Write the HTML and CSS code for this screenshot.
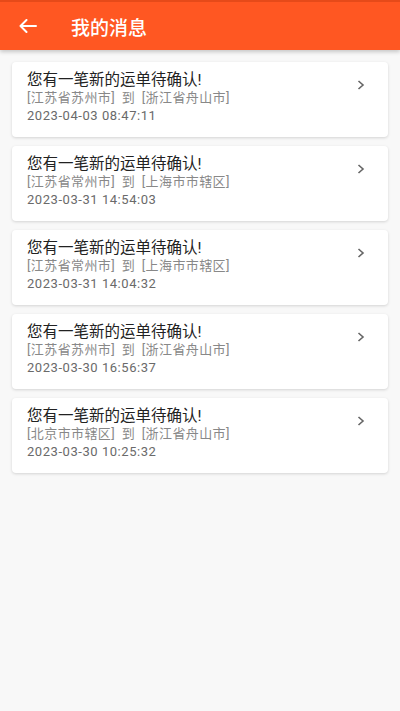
FILE: index.html
```html
<!DOCTYPE html>
<html lang="zh">
<head>
<meta charset="utf-8">
<link rel="stylesheet" href="styles.css">
</head>
<body>
<header class="topbar">
  <svg class="back" viewBox="0 0 18 14" width="18" height="14"><path d="M1.5 7H17M7.5 1L1.5 7l6 6" fill="none" stroke="#fff" stroke-width="2" stroke-linecap="round" stroke-linejoin="round"/></svg>
  <h1 class="title">我的消息</h1>
</header>
<main class="list">
  <div class="card">
    <div class="text">
      <div class="msg">您有一笔新的运单待确认!</div>
      <div class="route">[江苏省苏州市] 到 [浙江省舟山市]</div>
      <div class="time">2023-04-03 08:47:11</div>
    </div>
    <svg class="chev" viewBox="0 0 8 10" width="8" height="10"><path d="M1.5 1l4.5 4-4.5 4" fill="none" stroke="#666" stroke-width="1.6"/></svg>
  </div>
  <div class="card">
    <div class="text">
      <div class="msg">您有一笔新的运单待确认!</div>
      <div class="route">[江苏省常州市] 到 [上海市市辖区]</div>
      <div class="time">2023-03-31 14:54:03</div>
    </div>
    <svg class="chev" viewBox="0 0 8 10" width="8" height="10"><path d="M1.5 1l4.5 4-4.5 4" fill="none" stroke="#666" stroke-width="1.6"/></svg>
  </div>
  <div class="card">
    <div class="text">
      <div class="msg">您有一笔新的运单待确认!</div>
      <div class="route">[江苏省常州市] 到 [上海市市辖区]</div>
      <div class="time">2023-03-31 14:04:32</div>
    </div>
    <svg class="chev" viewBox="0 0 8 10" width="8" height="10"><path d="M1.5 1l4.5 4-4.5 4" fill="none" stroke="#666" stroke-width="1.6"/></svg>
  </div>
  <div class="card">
    <div class="text">
      <div class="msg">您有一笔新的运单待确认!</div>
      <div class="route">[江苏省苏州市] 到 [浙江省舟山市]</div>
      <div class="time">2023-03-30 16:56:37</div>
    </div>
    <svg class="chev" viewBox="0 0 8 10" width="8" height="10"><path d="M1.5 1l4.5 4-4.5 4" fill="none" stroke="#666" stroke-width="1.6"/></svg>
  </div>
  <div class="card">
    <div class="text">
      <div class="msg">您有一笔新的运单待确认!</div>
      <div class="route">[北京市市辖区] 到 [浙江省舟山市]</div>
      <div class="time">2023-03-30 10:25:32</div>
    </div>
    <svg class="chev" viewBox="0 0 8 10" width="8" height="10"><path d="M1.5 1l4.5 4-4.5 4" fill="none" stroke="#666" stroke-width="1.6"/></svg>
  </div>
</main>
</body>
</html>
```
FILE: styles.css
```css
* { box-sizing: border-box; }
html, body { margin: 0; padding: 0; }
body {
  background: #f8f8f8;
  font-family: Roboto, "Noto Sans CJK SC", sans-serif;
  width: 400px;
  min-height: 711px;
}
.topbar {
  height: 50px;
  background: #ff5722;
  border-top: 2px solid #e64a19;
  display: flex;
  align-items: center;
  padding-left: 19px;
  box-shadow: 0 2px 4px rgba(0,0,0,0.2);
}
.back { display: block; }
.title {
  margin: 0 0 0 34px;
  font-size: 19px;
  font-weight: 500;
  color: #fff;
}
.list {
  padding: 12px 12px;
  display: flex;
  flex-direction: column;
  gap: 9px;
}
.card {
  background: #fff;
  border-radius: 4px;
  box-shadow: 0 1px 3px rgba(0,0,0,0.15);
  height: 75px;
  padding: 9px 23px 0 15px;
  display: flex;
  justify-content: space-between;
  align-items: flex-start;
}
.msg {
  font-family: Roboto, "Noto Sans CJK SC", sans-serif;
  font-size: 15.5px;
  line-height: 18px;
  color: #222;
}
.route {
  font-size: 13px;
  line-height: 18px;
  letter-spacing: 0.4px;
  word-spacing: 3px;
  color: #888;
}
.time {
  font-size: 13px;
  line-height: 18px;
  letter-spacing: 0.55px;
  color: #6a6a6a;
}
.chev { margin-top: 9px; display: block; }
```
